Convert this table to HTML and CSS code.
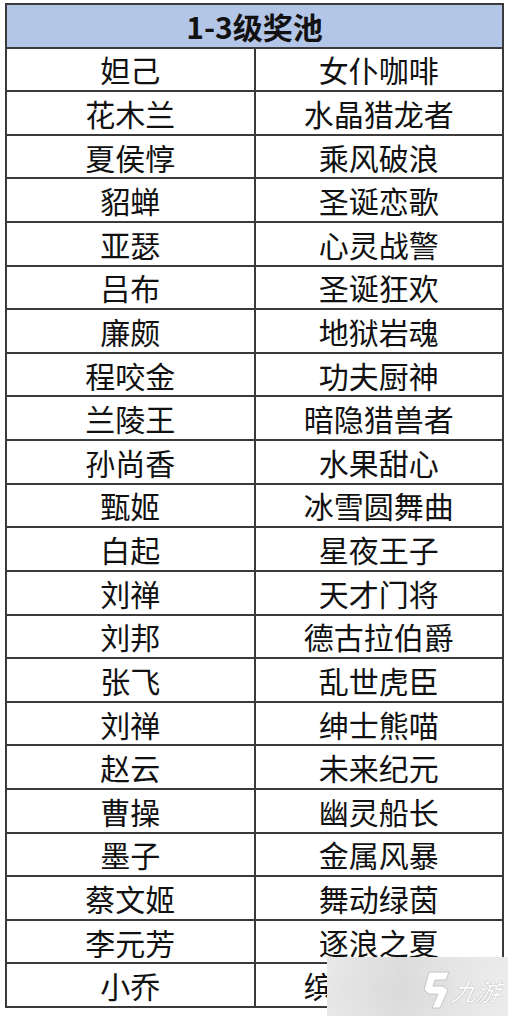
FILE: index.html
```html
<!DOCTYPE html>
<html lang="zh">
<head>
<meta charset="utf-8">
<link rel="stylesheet" href="styles.css">
</head>
<body>
<div class="page">
  <div class="sheet">
    <div class="head">1-3级奖池</div>
    <div class="cell">妲己</div><div class="cell">女仆咖啡</div>
    <div class="cell">花木兰</div><div class="cell">水晶猎龙者</div>
    <div class="cell">夏侯惇</div><div class="cell">乘风破浪</div>
    <div class="cell">貂蝉</div><div class="cell">圣诞恋歌</div>
    <div class="cell">亚瑟</div><div class="cell">心灵战警</div>
    <div class="cell">吕布</div><div class="cell">圣诞狂欢</div>
    <div class="cell">廉颇</div><div class="cell">地狱岩魂</div>
    <div class="cell">程咬金</div><div class="cell">功夫厨神</div>
    <div class="cell">兰陵王</div><div class="cell">暗隐猎兽者</div>
    <div class="cell">孙尚香</div><div class="cell">水果甜心</div>
    <div class="cell">甄姬</div><div class="cell">冰雪圆舞曲</div>
    <div class="cell">白起</div><div class="cell">星夜王子</div>
    <div class="cell">刘禅</div><div class="cell">天才门将</div>
    <div class="cell">刘邦</div><div class="cell">德古拉伯爵</div>
    <div class="cell">张飞</div><div class="cell">乱世虎臣</div>
    <div class="cell">刘禅</div><div class="cell">绅士熊喵</div>
    <div class="cell">赵云</div><div class="cell">未来纪元</div>
    <div class="cell">曹操</div><div class="cell">幽灵船长</div>
    <div class="cell">墨子</div><div class="cell">金属风暴</div>
    <div class="cell">蔡文姬</div><div class="cell">舞动绿茵</div>
    <div class="cell">李元芳</div><div class="cell">逐浪之夏</div>
    <div class="cell">小乔</div><div class="cell">缤纷独角兽</div>
  </div>
  <div class="mark">
    <svg class="logo" viewBox="0 0 30 40" width="30" height="40">
      <path d="M8 2 L28 2 L25 10 L14 10 L12 16 L22 16 L27 20 L19 38 L11 38 L17 24 L8 24 L3 20 Z" fill="#ffffff" stroke="#c4c4c4" stroke-width="1"/>
    </svg>
    <span class="brand">九游</span>
  </div>
</div>
</body>
</html>
```
FILE: styles.css
```css
html, body {
  margin: 0;
  padding: 0;
  background: #ffffff;
}
.page {
  position: relative;
  width: 508px;
  height: 1016px;
  padding: 3px 0 0 5px;
  box-sizing: border-box;
  overflow: hidden;
}
.sheet {
  width: 499px;
  height: 1005px;
  box-sizing: border-box;
  display: grid;
  grid-template-columns: 1fr 1fr;
  grid-template-rows: repeat(23, 1fr);
  border-top: 2px solid #3a3a3a;
  border-left: 2px solid #3a3a3a;
  font-family: "Noto Sans CJK SC", "Noto Sans", sans-serif;
  color: #111111;
}
.head {
  grid-column: 1 / 3;
  background: #b4c6e7;
  border-right: 2px solid #3a3a3a;
  border-bottom: 2px solid #3a3a3a;
  display: flex;
  align-items: center;
  justify-content: center;
  font-weight: bold;
  font-size: 30px;
  line-height: 1;
  padding-top: 1px;
}
.cell {
  border-right: 2px solid #3a3a3a;
  border-bottom: 2px solid #3a3a3a;
  display: flex;
  align-items: center;
  justify-content: center;
  font-size: 30px;
  line-height: 1;
  white-space: nowrap;
}
.mark {
  position: absolute;
  left: 327px;
  top: 957px;
  width: 181px;
  height: 59px;
  background: linear-gradient(90deg, rgba(232,232,232,0.97) 0%, rgba(220,220,220,0.97) 40%, rgba(236,236,236,0.97) 100%);
  backdrop-filter: blur(6px);
  display: flex;
  align-items: center;
  padding-left: 94px;
  box-sizing: border-box;
  gap: 2px;
}
.logo {
  display: block;
  margin-top: 6px;
}
.brand {
  font-family: "Noto Sans CJK SC", sans-serif;
  font-size: 24px;
  font-style: italic;
  color: #ffffff;
  text-shadow: 0 0 1px #a8a8a8, 0 0 1px #a8a8a8;
  margin-top: 8px;
  transform: skewX(-12deg);
}
```
